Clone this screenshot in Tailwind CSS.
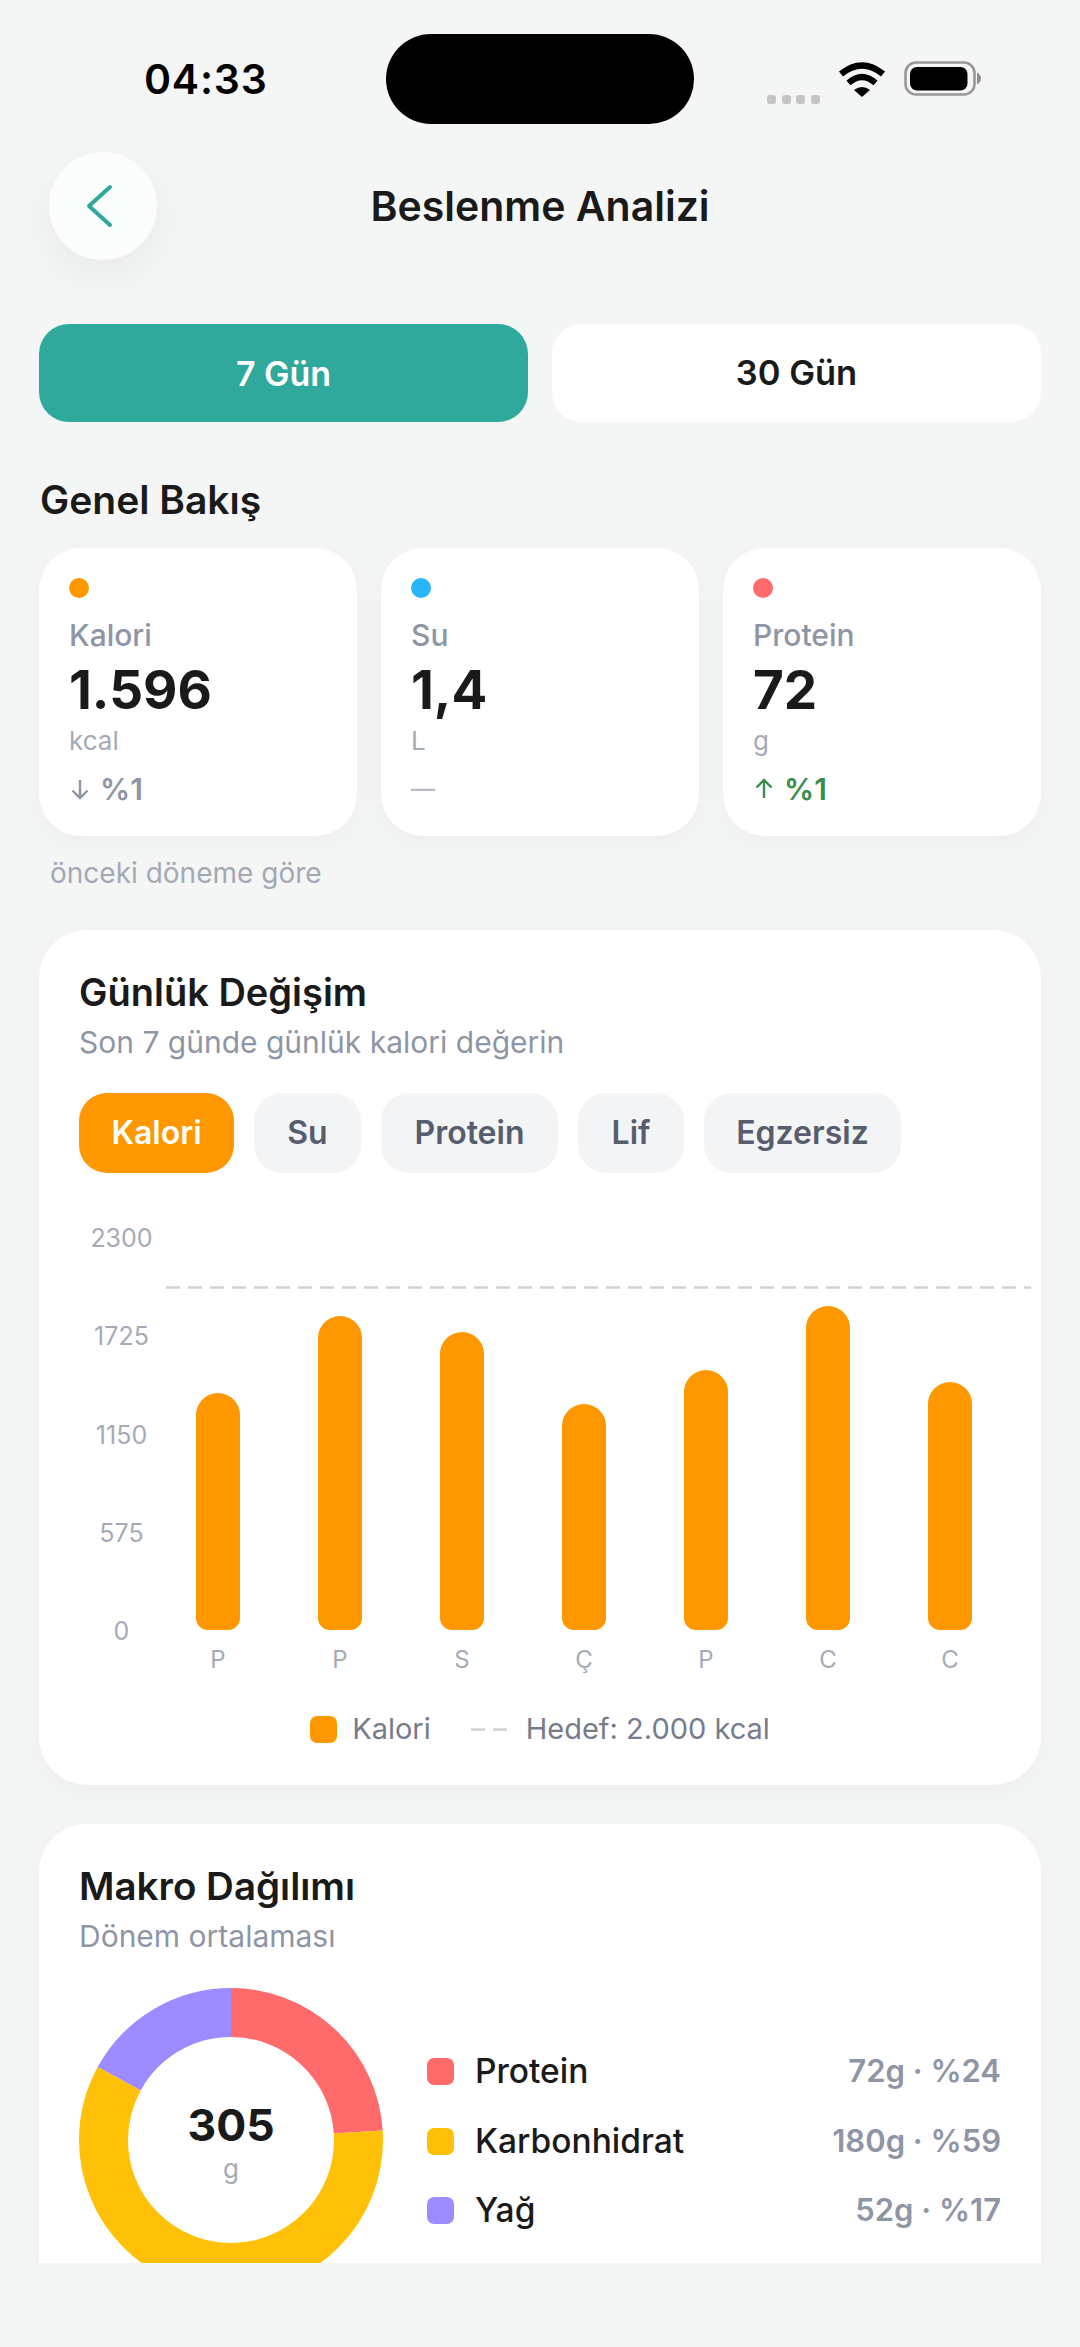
<!DOCTYPE html>
<html lang="tr">
<head>
    <meta charset="UTF-8">
    <meta name="viewport" content="width=device-width, initial-scale=1.0">
    <title>Beslenme Analizi</title>
    <script src="https://cdn.jsdelivr.net/npm/@tailwindcss/browser@4"></script>
</head>
<body class="bg-[#f4f6f5] text-[#1a1a1a] font-['Inter',sans-serif]">
<div class="w-[1080px] h-[2347px] overflow-hidden">
  <div class="h-[2263px] overflow-hidden">

    <!-- Status bar -->
    <div class="flex items-center h-[124px] pt-[34px]">
        <div class="w-[386px] pl-[144px] text-[41px] leading-[48px] font-semibold tracking-[0.8px] text-black">04:33</div>
        <div class="w-[308px] h-[90px] rounded-full bg-black"></div>
        <div class="flex items-center h-[90px] pl-[73px]">
            <div class="flex gap-[5.5px] self-end mb-[20px]">
                <span class="w-[9px] h-[9px] rounded-[3px] bg-[#c4c4c4]"></span>
                <span class="w-[9px] h-[9px] rounded-[3px] bg-[#c4c4c4]"></span>
                <span class="w-[9px] h-[9px] rounded-[3px] bg-[#c4c4c4]"></span>
                <span class="w-[9px] h-[9px] rounded-[3px] bg-[#c4c4c4]"></span>
            </div>
            <svg class="ml-[18px] mb-[1px]" width="48" height="36" viewBox="0 0 48 36">
                <path d="M3 13 Q24 -4 45 13" fill="none" stroke="#000" stroke-width="6.5"/>
                <path d="M10.5 22 Q24 10 37.5 22" fill="none" stroke="#000" stroke-width="6"/>
                <path d="M16 29 Q24 23 32 29 L24 36 Z" fill="#000"/>
            </svg>
            <svg class="ml-[18px] mb-[1px]" width="77" height="35" viewBox="0 0 77 35">
                <rect x="1.5" y="1.5" width="69" height="32" rx="10.5" fill="none" stroke="#989898" stroke-width="2.6"/>
                <rect x="6" y="6" width="57.5" height="23.5" rx="7" fill="#000"/>
                <path d="M73 11.5 Q77 14 77 17.5 Q77 21 73 23.5 Z" fill="#8f8f8f"/>
            </svg>
        </div>
    </div>

    <!-- Header -->
    <div class="grid grid-cols-[1fr_auto_1fr] items-center px-[49px] mt-[28px] h-[108px]">
        <button class="w-[108px] h-[108px] rounded-full bg-[#fbfdfc] shadow-[0_16px_40px_rgba(0,0,0,0.05)] flex items-center justify-center">
            <svg class="mr-[8px]" width="30" height="46" viewBox="0 0 30 46">
                <path d="M26 4 L5 23 L26 42" fill="none" stroke="#2fa89c" stroke-width="4" stroke-linecap="round" stroke-linejoin="round"/>
            </svg>
        </button>
        <h1 class="text-[41px] leading-[48px] font-semibold">Beslenme Analizi</h1>
        <div></div>
    </div>

    <!-- Period tabs -->
    <div class="flex gap-[24px] px-[39px] mt-[64px]">
        <button class="flex-1 h-[98px] rounded-[30px] bg-[#30a99d] text-white text-[34px] font-semibold">7 Gün</button>
        <button class="flex-1 h-[98px] rounded-[30px] bg-white text-[#1a1a1a] text-[34.5px] font-semibold">30 Gün</button>
    </div>

    <!-- Overview -->
    <h2 class="px-[40px] mt-[56px] text-[39px] leading-[44px] font-semibold">Genel Bakış</h2>
    <div class="flex gap-[24px] px-[39px] mt-[26px]">
        <div class="flex-1 h-[288px] rounded-[42px] bg-white px-[30px] pt-[30px] shadow-[0_8px_24px_rgba(0,0,0,0.03)]">
            <div class="w-[20px] h-[20px] rounded-full bg-[#ff9800]"></div>
            <div class="mt-[19px] text-[30px] leading-[36px] font-medium text-[#8e95a5]">Kalori</div>
            <div class="mt-[9px] text-[53px] leading-[56px] font-bold">1.596</div>
            <div class="mt-[7px] text-[26px] leading-[32px] text-[#a5abb6]">kcal</div>
            <div class="mt-[14px] flex items-center gap-[9px] text-[30px] leading-[36px] font-semibold text-[#8e95a5]">
                <svg width="22" height="24" viewBox="0 0 22 24"><path d="M11 3 V21 M3.5 13.5 L11 21 L18.5 13.5" fill="none" stroke="#8e95a5" stroke-width="2.4"/></svg>
                <span>%1</span>
            </div>
        </div>
        <div class="flex-1 h-[288px] rounded-[42px] bg-white px-[30px] pt-[30px] shadow-[0_8px_24px_rgba(0,0,0,0.03)]">
            <div class="w-[20px] h-[20px] rounded-full bg-[#29b6f6]"></div>
            <div class="mt-[19px] text-[30px] leading-[36px] font-medium text-[#8e95a5]">Su</div>
            <div class="mt-[9px] text-[53px] leading-[56px] font-bold">1,4</div>
            <div class="mt-[7px] text-[26px] leading-[32px] text-[#a5abb6]">L</div>
            <div class="mt-[14px] text-[24px] leading-[36px] font-medium text-[#b5bac5]">—</div>
        </div>
        <div class="flex-1 h-[288px] rounded-[42px] bg-white px-[30px] pt-[30px] shadow-[0_8px_24px_rgba(0,0,0,0.03)]">
            <div class="w-[20px] h-[20px] rounded-full bg-[#ff6b6b]"></div>
            <div class="mt-[19px] text-[30px] leading-[36px] font-medium text-[#8e95a5]">Protein</div>
            <div class="mt-[9px] text-[53px] leading-[56px] font-bold">72</div>
            <div class="mt-[7px] text-[26px] leading-[32px] text-[#a5abb6]">g</div>
            <div class="mt-[14px] flex items-center gap-[9px] text-[30px] leading-[36px] font-semibold text-[#388e4a]">
                <svg width="22" height="24" viewBox="0 0 22 24"><path d="M11 21 V3 M3.5 10.5 L11 3 L18.5 10.5" fill="none" stroke="#388e4a" stroke-width="2.4"/></svg>
                <span>%1</span>
            </div>
        </div>
    </div>
    <div class="ml-[50px] mt-[20px] text-[28px] leading-[34px] text-[#a3a9b4]">önceki döneme göre</div>

    <!-- Daily change chart -->
    <section class="mx-[39px] mt-[40px] rounded-[48px] bg-white px-[40px] pt-[40px] pb-[41px] shadow-[0_8px_24px_rgba(0,0,0,0.03)]">
        <h2 class="text-[38px] leading-[44px] font-semibold">Günlük Değişim</h2>
        <p class="mt-[10px] text-[30px] leading-[36px] text-[#8e95a5]">Son 7 günde günlük kalori değerin</p>
        <div class="flex gap-[20px] mt-[33px]">
            <button class="w-[155px] h-[80px] rounded-[28px] bg-[#ff9800] text-white text-[32px] font-semibold">Kalori</button>
            <button class="w-[107px] h-[80px] rounded-[28px] bg-[#f3f4f6] text-[#565d6d] text-[32px] font-semibold">Su</button>
            <button class="w-[177px] h-[80px] rounded-[28px] bg-[#f3f4f6] text-[#565d6d] text-[32px] font-semibold">Protein</button>
            <button class="w-[106px] h-[80px] rounded-[28px] bg-[#f3f4f6] text-[#565d6d] text-[32px] font-semibold">Lif</button>
            <button class="w-[197px] h-[80px] rounded-[28px] bg-[#f3f4f6] text-[#565d6d] text-[32px] font-semibold">Egzersiz</button>
        </div>

        <div class="flex mt-[50px]">
            <div class="w-[78px] shrink-0 h-[423px] pl-[7px] flex flex-col justify-between text-center text-[25px] leading-[30px] text-[#a5abb6]">
                <span>2300</span><span>1725</span><span>1150</span><span>575</span><span>0</span>
            </div>
            <div class="shrink-0">
                <div class="relative flex items-end h-[407px]">
                    <svg class="absolute left-[9px] top-[63px]" width="865" height="3"><line x1="0" y1="1.5" x2="865" y2="1.5" stroke="#ced3d5" stroke-width="2.5" stroke-dasharray="14 8"/></svg>
                    <div class="w-[122px] flex justify-center"><div class="w-[44px] h-[237px] rounded-t-[22px] rounded-b-[12px] bg-[#ff9800]"></div></div>
                    <div class="w-[122px] flex justify-center"><div class="w-[44px] h-[314px] rounded-t-[22px] rounded-b-[12px] bg-[#ff9800]"></div></div>
                    <div class="w-[122px] flex justify-center"><div class="w-[44px] h-[298px] rounded-t-[22px] rounded-b-[12px] bg-[#ff9800]"></div></div>
                    <div class="w-[122px] flex justify-center"><div class="w-[44px] h-[226px] rounded-t-[22px] rounded-b-[12px] bg-[#ff9800]"></div></div>
                    <div class="w-[122px] flex justify-center"><div class="w-[44px] h-[260px] rounded-t-[22px] rounded-b-[12px] bg-[#ff9800]"></div></div>
                    <div class="w-[122px] flex justify-center"><div class="w-[44px] h-[324px] rounded-t-[22px] rounded-b-[12px] bg-[#ff9800]"></div></div>
                    <div class="w-[122px] flex justify-center"><div class="w-[44px] h-[248px] rounded-t-[22px] rounded-b-[12px] bg-[#ff9800]"></div></div>
                </div>
                <div class="flex mt-[15px] text-[24px] leading-[30px] text-[#a5abb6]">
                    <span class="w-[122px] text-center">P</span>
                    <span class="w-[122px] text-center">P</span>
                    <span class="w-[122px] text-center">S</span>
                    <span class="w-[122px] text-center">Ç</span>
                    <span class="w-[122px] text-center">P</span>
                    <span class="w-[122px] text-center">C</span>
                    <span class="w-[122px] text-center">C</span>
                </div>
            </div>
        </div>

        <div class="flex items-center justify-center mt-[39px] h-[30px] text-[29px] leading-[30px] text-[#767c8c]">
            <span class="w-[27px] h-[27px] rounded-[7px] bg-[#ff9800]"></span>
            <span class="ml-[15px]">Kalori</span>
            <svg class="ml-[40px]" width="36" height="3"><line x1="0" y1="1.5" x2="36" y2="1.5" stroke="#ced3d5" stroke-width="2.5" stroke-dasharray="14 8"/></svg>
            <span class="ml-[19px]">Hedef: 2.000 kcal</span>
        </div>
    </section>

    <!-- Macro split -->
    <section class="mx-[39px] mt-[39px] rounded-[48px] bg-white px-[40px] pt-[40px] pb-[41px] shadow-[0_8px_24px_rgba(0,0,0,0.03)]">
        <h2 class="text-[38.5px] leading-[44px] font-semibold">Makro Dağılımı</h2>
        <p class="mt-[10px] text-[30px] leading-[36px] text-[#8e95a5]">Dönem ortalaması</p>
        <div class="flex items-center gap-[44px] mt-[34px]">
            <div class="relative w-[304px] h-[304px] shrink-0">
                <svg width="304" height="304" viewBox="0 0 304 304" class="-rotate-90">
                    <circle cx="152" cy="152" r="127.5" fill="none" stroke="#ff6b6b" stroke-width="49" pathLength="100" stroke-dasharray="24 76"/>
                    <circle cx="152" cy="152" r="127.5" fill="none" stroke="#ffc107" stroke-width="49" pathLength="100" stroke-dasharray="59 41" stroke-dashoffset="-24"/>
                    <circle cx="152" cy="152" r="127.5" fill="none" stroke="#9c8cff" stroke-width="49" pathLength="100" stroke-dasharray="17 83" stroke-dashoffset="-83"/>
                </svg>
                <div class="absolute inset-0 flex flex-col items-center">
                    <span class="mt-[112px] text-[44.5px] leading-[50px] font-bold">305</span>
                    <span class="mt-[4px] text-[26px] leading-[30px] text-[#a5abb6]">g</span>
                </div>
            </div>
            <div class="flex-1 flex flex-col gap-[33.5px] pt-[2px]">
                <div class="flex items-center h-[36px]">
                    <span class="w-[27px] h-[27px] rounded-[7px] bg-[#ff6b6b]"></span>
                    <span class="ml-[21px] text-[33.5px] font-medium">Protein</span>
                    <span class="ml-auto text-[31px] font-semibold text-[#8e95a5]">72g · %24</span>
                </div>
                <div class="flex items-center h-[36px]">
                    <span class="w-[27px] h-[27px] rounded-[7px] bg-[#ffc107]"></span>
                    <span class="ml-[21px] text-[33.5px] font-medium">Karbonhidrat</span>
                    <span class="ml-auto text-[31px] font-semibold text-[#8e95a5]">180g · %59</span>
                </div>
                <div class="flex items-center h-[36px]">
                    <span class="w-[27px] h-[27px] rounded-[7px] bg-[#9c8cff]"></span>
                    <span class="ml-[21px] text-[33.5px] font-medium">Yağ</span>
                    <span class="ml-auto text-[31px] font-semibold text-[#8e95a5]">52g · %17</span>
                </div>
            </div>
        </div>
    </section>
  </div>
</div>
</body>
</html>
